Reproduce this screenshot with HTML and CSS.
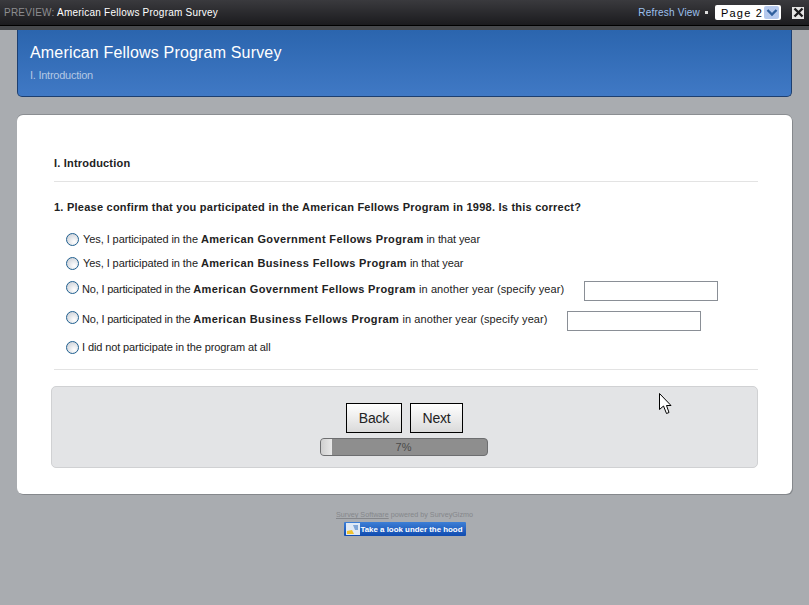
FILE: index.html
```html
<!DOCTYPE html>
<html lang="en">
<head>
  <meta charset="UTF-8">
  <title>American Fellows Program Survey</title>
  <meta name="viewport" content="width=device-width, initial-scale=1.0">
  <link rel="stylesheet" href="styles.css">
</head>
<body>
  <!-- preview toolbar -->
  <div class="preview-bar">
    <div class="preview-title"><span class="preview-label">PREVIEW:</span> American Fellows Program Survey</div>
    <div class="preview-tools">
      <a href="#" class="refresh-link">Refresh View</a>
      <span class="dot"></span>
      <div class="page-select">
        <span class="page-name">Page 2</span>
        <span class="page-arrow">
          <svg width="14" height="13" viewBox="0 0 14 13"><path d="M2.5 4 L7 8.5 L11.5 4" fill="none" stroke="#2f5f9e" stroke-width="2.4"/></svg>
        </span>
      </div>
      <span class="close-btn">
        <svg width="11" height="11" viewBox="0 0 11 11"><path d="M1.5 1.5 L9.5 9.5 M9.5 1.5 L1.5 9.5" fill="none" stroke="#1c1c1e" stroke-width="2.4"/></svg>
      </span>
    </div>
  </div>

  <div class="page">
    <div class="survey-header">
      <h1>American Fellows Program Survey</h1>
      <p>I. Introduction</p>
    </div>

    <div class="survey-card">
      <h2 class="section-title">I. Introduction</h2>

      <p class="question">1. Please confirm that you participated in the American Fellows Program in 1998. Is this correct?</p>

      <form class="answers">
        <label class="answer answer-yes">
          <input type="radio" name="q1" class="radio">
          <span class="answer-text">Yes, I participated in the <b>American Government Fellows Program</b> in that year</span>
        </label>
        <label class="answer answer-yes">
          <input type="radio" name="q1" class="radio">
          <span class="answer-text">Yes, I participated in the <b>American Business Fellows Program</b> in that year</span>
        </label>
        <label class="answer answer-gov">
          <input type="radio" name="q1" class="radio radio-raised">
          <span class="answer-text tight answer-no">No, I participated in the <b>American Government Fellows Program</b><span class="answer-tail"> in another year (specify year)</span></span>
          <input type="text" class="year-input">
        </label>
        <label class="answer answer-bus">
          <input type="radio" name="q1" class="radio radio-raised">
          <span class="answer-text tight answer-no">No, I participated in the <b>American Business Fellows Program</b><span class="answer-tail"> in another year (specify year)</span></span>
          <input type="text" class="year-input">
        </label>
        <label class="answer answer-yes">
          <input type="radio" name="q1" class="radio">
          <span class="answer-text tight">I did not participate in the program at all</span>
        </label>
      </form>

      <div class="nav-panel">
        <div class="nav-buttons">
          <button type="button" class="nav-btn back-btn">Back</button>
          <button type="button" class="nav-btn next-btn">Next</button>
        </div>
        <div class="progress">
          <div class="progress-fill"></div>
          <span class="progress-text">7%</span>
        </div>
      </div>
    </div>

    <div class="footer">
      <p class="credit"><a href="#">Survey Software</a> powered by SurveyGizmo</p>
      <a href="#" class="hood-badge">
        <svg class="hood-icon" width="14" height="12" viewBox="0 0 14 12"><rect width="14" height="12" fill="#dfe9f5"/><path d="M1 11 L1 8 L6 7 L8 11 Z" fill="#f0c22e"/><path d="M7 2 L12 2 L12 7 L9 7 Z" fill="#7fa6d8"/></svg>
        <span>Take a look under the hood</span>
      </a>
    </div>
  </div>

  <!-- mouse pointer caught in the screenshot -->
  <svg class="cursor" width="13" height="22" viewBox="0 0 13 22"><path d="M0.5 0.5 L0.5 16.5 L4.5 13 L7.5 20.5 L10 19.5 L7.5 12.5 L12 12.5 Z" fill="#fff" stroke="#000" stroke-width="1"/></svg>
</body>
</html>
```

FILE: styles.css
```css
html, body {
  margin: 0;
  height: 100%;
}
body {
  background-color: #a9acb0;
  font-family: "Liberation Sans", Arial, sans-serif;
  font-size: 11px;
  color: #222;
  overflow: hidden;
  position: relative;
}
.preview-bar {
  height: 25px;
  background: linear-gradient(#3a3a3e, #1b1b1e);
  border-bottom: 1px solid #000;
  box-shadow: 0 4px 0 #47494c;
  display: flex;
  justify-content: space-between;
  align-items: center;
  padding: 0 5px 0 4px;
  color: #fff;
  font-size: 10px;
  letter-spacing: 0.23px;
}
.preview-label {
  color: #8d8d90;
}
.preview-tools {
  display: flex;
  align-items: center;
}
.refresh-link {
  color: #9dc0ee;
  text-decoration: none;
  letter-spacing: 0.2px;
}
.dot {
  width: 3px;
  height: 3px;
  background: #ddd;
  margin: 0 7px 0 5px;
}
.page-select {
  width: 66px;
  height: 15px;
  background: #fff;
  border-radius: 2px;
  display: flex;
  align-items: center;
  justify-content: space-between;
  color: #000;
  font-size: 11px;
  letter-spacing: 1.2px;
  overflow: hidden;
}
.page-name {
  padding-left: 6px;
  width: 41px;
  overflow: hidden;
  white-space: nowrap;
}
.page-arrow {
  width: 15px;
  height: 13px;
  margin-right: 2px;
  background: #b5c9ee;
  border-radius: 2px;
  display: flex;
  align-items: center;
  justify-content: center;
}
.close-btn {
  width: 12px;
  height: 12px;
  background: #e6e6e6;
  margin-left: 11px;
  display: flex;
  align-items: center;
  justify-content: center;
}
.page {
  padding: 4px 17px 0;
}
.survey-header {
  height: 66px;
  background: linear-gradient(#2b65ae, #4079c5);
  border: 1px solid #1d3f70;
  border-top: none;
  border-radius: 0 0 5px 5px;
  padding-left: 12px;
  color: #fff;
}
.survey-header h1 {
  margin: 0;
  padding-top: 14px;
  font-size: 16px;
  font-weight: normal;
  line-height: 18px;
  letter-spacing: 0.17px;
}
.survey-header p {
  margin: 7px 0 0;
  font-size: 11px;
  line-height: 13px;
  letter-spacing: -0.25px;
  color: #b4c8e4;
}
.survey-card {
  margin-top: 18px;
  height: 379px;
  box-sizing: border-box;
  background: #fff;
  border-radius: 6px;
  box-shadow: 0 -1px 0 #8b8e92, 1px 1px 0 #85888c;
  padding: 41px 34px 0;
}
.section-title {
  margin: 0 0 0 3px;
  padding-bottom: 11px;
  border-bottom: 1px solid #e3e3e3;
  font-size: 11px;
  line-height: 14px;
  letter-spacing: 0.2px;
  color: #222;
}
.question {
  margin: 18px 0 0 3px;
  font-size: 11px;
  line-height: 14px;
  font-weight: bold;
  letter-spacing: 0.24px;
  color: #222;
}
.answers {
  margin: 13px 0 0 3px;
  padding-bottom: 10px;
  border-bottom: 1px solid #e3e3e3;
}
.answer {
  display: flex;
  align-items: center;
  padding-left: 12px;
  letter-spacing: -0.08px;
}
.answer b {
  letter-spacing: 0.37px;
}
.answer-yes {
  height: 24px;
}
.answer-gov {
  height: 28px;
}
.answer-bus {
  height: 32px;
}
.radio {
  appearance: none;
  width: 13px;
  height: 13px;
  margin: 0 4px 0 0;
  border: 1px solid #1f5f8f;
  border-radius: 50%;
  background: radial-gradient(circle at 65% 70%, #ffffff, #d0d4da 80%);
  box-sizing: border-box;
  flex: none;
}
.radio-raised {
  margin-bottom: 4px;
}
.answer-text {
  white-space: nowrap;
}
.tight {
  margin-left: -1px;
  letter-spacing: -0.11px;
}
.answer-no {
  letter-spacing: -0.19px;
}
.answer-tail {
  letter-spacing: 0.09px;
}
.year-input {
  width: 134px;
  height: 20px;
  box-sizing: border-box;
  margin: 4px 0 0 19px;
  padding: 0 3px;
  border: 1px solid #8a8f96;
  background: #fff;
  flex: none;
}
.answer-gov .year-input {
  margin-left: 20px;
}
.nav-panel {
  margin-top: 16px;
  height: 82px;
  box-sizing: border-box;
  background: #e3e4e6;
  border: 1px solid #d0d1d3;
  border-radius: 5px;
  display: flex;
  flex-direction: column;
  align-items: center;
  padding-top: 16px;
}
.nav-buttons {
  display: flex;
  gap: 8px;
}
.nav-btn {
  height: 30px;
  box-sizing: border-box;
  border: 1px solid #000;
  background: linear-gradient(#ffffff, #dadada);
  font-family: "Liberation Sans", Arial, sans-serif;
  font-size: 14px;
  letter-spacing: -0.2px;
  color: #222;
  padding: 0;
}
.back-btn {
  width: 56px;
}
.next-btn {
  width: 53px;
}
.progress {
  margin: 5px 2px 0 0;
  width: 168px;
  height: 18px;
  box-sizing: border-box;
  background: #8e8e8e;
  border: 1px solid #6d6e70;
  border-radius: 4px;
  position: relative;
  text-align: center;
  overflow: hidden;
}
.progress-fill {
  position: absolute;
  left: 0;
  top: 0;
  bottom: 0;
  width: 11px;
  background: linear-gradient(90deg, #cfcfcf, #e8e8e8);
}
.progress-text {
  position: relative;
  line-height: 16px;
  color: #4a4a4a;
  font-size: 11px;
}
.footer {
  margin-top: 16px;
  display: flex;
  flex-direction: column;
  align-items: center;
}
.credit {
  margin: 0;
  font-size: 7.2px;
  line-height: 10px;
  color: #85878b;
}
.credit a {
  color: #85878b;
}
.hood-badge {
  margin-top: 2px;
  height: 14px;
  width: 122px;
  box-sizing: border-box;
  background: linear-gradient(#3d7fd6, #0f4bb0);
  border-radius: 1px;
  color: #fff;
  font-size: 7.9px;
  font-weight: bold;
  text-decoration: none;
  display: flex;
  align-items: center;
  gap: 1px;
  padding-left: 2px;
  white-space: nowrap;
}
.hood-icon {
  flex: none;
}
.cursor {
  position: absolute;
  left: 659px;
  top: 393px;
}
```
